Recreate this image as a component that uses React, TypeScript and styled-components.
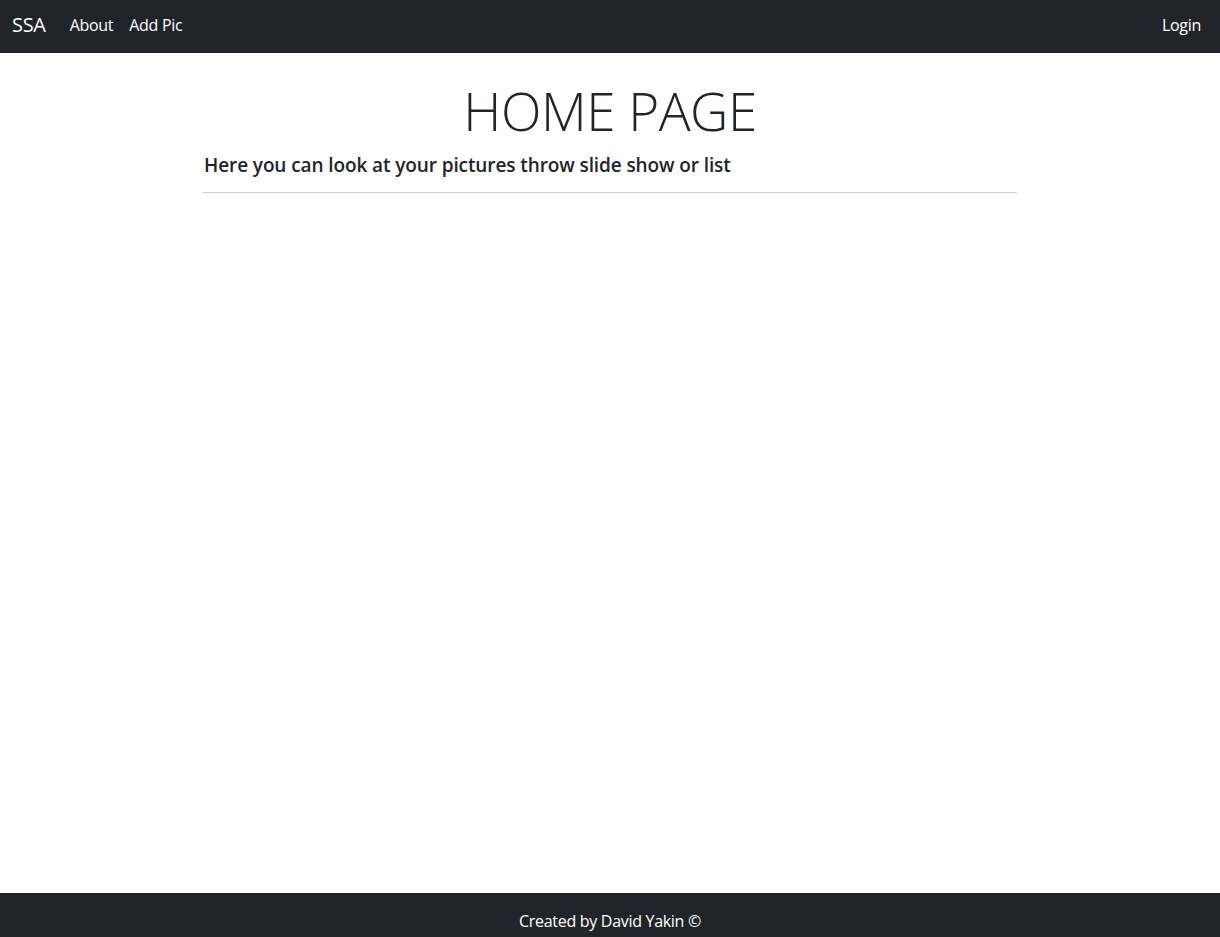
import React from "react";
import styled, { createGlobalStyle } from "styled-components";

const Global = createGlobalStyle`
  html, body { margin: 0; padding: 0; height: 100%; }
  body {
    font-family: "Open Sans", "Noto Sans", "Liberation Sans", sans-serif;
    color: #212529;
    background: #fff;
  }
  #root { min-height: 100vh; }
`;

const Page = styled.div`
  display: flex;
  flex-direction: column;
  min-height: 937px;
`;

const NavBar = styled.nav`
  height: 53px;
  background: #212529;
  display: flex;
  align-items: center;
  padding: 0 11px 4px 12px;
  box-sizing: border-box;
`;

const Brand = styled.a`
  color: #fff;
  font-size: 20px;
  margin-right: 16px;
  text-decoration: none;
  letter-spacing: -0.3px;
`;

const NavLink = styled.a<{ $right?: boolean }>`
  color: #fff;
  font-size: 16px;
  padding: 0 8px;
  text-decoration: none;
  margin-left: ${(p) => (p.$right ? "auto" : "0")};
  letter-spacing: -0.3px;
`;

const Main = styled.main`
  flex: 1;
  width: 814px;
  margin: 0 auto;
  display: flex;
  flex-direction: column;
`;

const Title = styled.h1`
  margin: 26px 0 0;
  font-size: 53px;
  font-weight: 300;
  line-height: 1.2;
  text-align: center;
  letter-spacing: -0.5px;
`;

const Subtitle = styled.h5`
  margin: 8px 0 0;
  padding-left: 1px;
  font-size: 19px;
  font-weight: 600;
  line-height: 28px;
  letter-spacing: -0.1px;
`;

const Rule = styled.hr`
  margin: 13px 0 0;
  border: 0;
  border-top: 1px solid #cfcfcf;
`;

const Footer = styled.footer`
  height: 44px;
  background: #212529;
  color: #fff;
  font-size: 16px;
  display: flex;
  align-items: flex-end;
  justify-content: center;
  padding-bottom: 5px;
  box-sizing: border-box;
  letter-spacing: -0.3px;
`;

export default function App() {
  return (
    <>
      <Global />
      <Page>
        <NavBar>
          <Brand>SSA</Brand>
          <NavLink>About</NavLink>
          <NavLink>Add Pic</NavLink>
          <NavLink $right>Login</NavLink>
        </NavBar>
        <Main>
          <Title>HOME PAGE</Title>
          <Subtitle>Here you can look at your pictures throw slide show or list</Subtitle>
          <Rule />
        </Main>
        <Footer>Created by David Yakin ©</Footer>
      </Page>
    </>
  );
}
